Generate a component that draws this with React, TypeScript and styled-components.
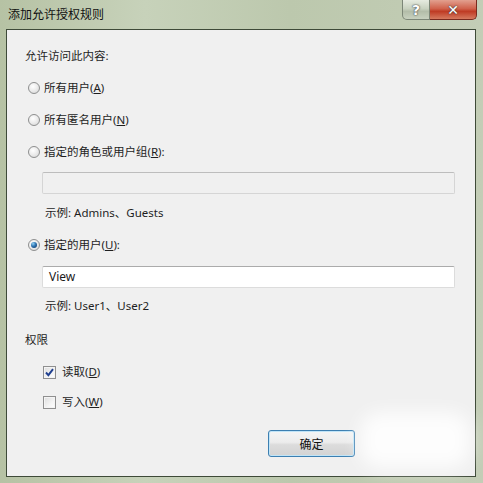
import React from 'react';
import styled, { createGlobalStyle } from 'styled-components';

const GlobalStyle = createGlobalStyle`
  html, body {
    margin: 0;
    padding: 0;
    background: #b7c3a8;
  }
  * {
    box-sizing: border-box;
  }
`;

const Frame = styled.div`
  position: relative;
  width: 483px;
  height: 483px;
  overflow: hidden;
  display: flex;
  flex-direction: column;
  padding: 0 7px 6px 6px;
  background: linear-gradient(90deg, #b6c2a4 0%, #c7d2ba 30%, #bcc8ad 60%, #c3cdb6 100%);
  font-family: 'Noto Sans', 'Noto Sans CJK SC', sans-serif;
  font-size: 11.5px;
  color: #1e1e1e;
`;

const TitleBar = styled.div`
  height: 29px;
  flex: none;
  display: flex;
  align-items: flex-start;
  justify-content: space-between;
`;

const Title = styled.div`
  padding: 5px 0 0 2px;
  font-size: 12px;
  color: #111;
`;

const Caption = styled.div`
  display: flex;
  margin-right: -1px;
`;

const CaptionButton = styled.div<{ $close?: boolean }>`
  width: ${(p) => (p.$close ? 47 : 28)}px;
  height: 20px;
  display: flex;
  align-items: center;
  justify-content: center;
  border: 1px solid ${(p) => (p.$close ? '#7a2a1e' : '#7c8677')};
  border-top: none;
  border-left: ${(p) => (p.$close ? 'none' : '1px solid #7c8677')};
  border-radius: ${(p) => (p.$close ? '0 0 5px 0' : '0 0 0 5px')};
  background: ${(p) =>
    p.$close
      ? 'linear-gradient(180deg, #e2a08f 0%, #d0624c 45%, #bf3b24 60%, #d67a5f 100%)'
      : 'linear-gradient(180deg, #e6ebe0 0%, #c9d2c0 45%, #b3bda9 60%, #c8d1bf 100%)'};
  color: #fff;
  font-weight: bold;
  font-size: 14px;
  font-family: 'DejaVu Sans', sans-serif;
  text-shadow: 0 0 2px #444, 0 0 1px #333;
`;

const Client = styled.div`
  flex: 1;
  border: 1px solid #3e4a38;
  background: #f0f0f0;
  padding: 0 0 0 18px;
  display: flex;
  flex-direction: column;
  align-items: flex-start;
`;

const Line = styled.div<{ $top: number; $indent?: number }>`
  margin-top: ${(p) => p.$top}px;
  margin-left: ${(p) => p.$indent ?? 0}px;
  height: 20px;
  line-height: 20px;
  display: flex;
  align-items: center;
  white-space: nowrap;
`;

const Radio = styled.span<{ $checked?: boolean }>`
  position: relative;
  width: 12px;
  height: 12px;
  margin: 0 4px 0 -1px;
  border-radius: 50%;
  border: 1px solid #8e8f8f;
  background: radial-gradient(circle at 40% 35%, #ffffff 0%, #ebebeb 50%, #d2d2d2 100%);
  flex: none;

  &::after {
    content: '';
    display: ${(p) => (p.$checked ? 'block' : 'none')};
    position: absolute;
    left: 2px;
    top: 2px;
    width: 6px;
    height: 6px;
    border-radius: 50%;
    background: radial-gradient(circle at 35% 30%, #8fd0f2 0%, #2d73b1 45%, #0c2e5a 100%);
  }
`;

const Check = styled.span<{ $checked?: boolean }>`
  width: 13px;
  height: 13px;
  margin-right: 6px;
  border: 1px solid #8f8f8f;
  background: linear-gradient(135deg, #dcdcdc 0%, #f4f4f4 60%, #ffffff 100%);
  box-shadow: inset 0 0 0 1px #f4f4f4;
  display: flex;
  align-items: center;
  justify-content: center;
  flex: none;
`;

const TextBox = styled.div<{ $disabled?: boolean; $top: number }>`
  margin: ${(p) => p.$top}px 0 0 17px;
  width: 413px;
  height: 22px;
  padding: 0 6px;
  line-height: 20px;
  font-size: 12px;
  border: 1px solid ${(p) => (p.$disabled ? '#d5d5d5' : '#dcdcdc')};
  border-top-color: ${(p) => (p.$disabled ? '#bdbdbd' : '#ababab')};
  border-radius: 2px;
  background: ${(p) => (p.$disabled ? '#f0f0f0' : '#ffffff')};
  color: #1a1a1a;
`;

const Hint = styled(Line)`
  margin-left: 20px;
`;

const Footer = styled.div`
  margin-top: 18px;
  margin-left: 243px;
  display: flex;
`;

const Button = styled.div`
  width: 87px;
  height: 27px;
  display: flex;
  align-items: center;
  justify-content: center;
  border: 1px solid #3c7fb1;
  border-radius: 3px;
  background: linear-gradient(180deg, #f4f5f5 0%, #ececec 45%, #dcdcdc 55%, #d3d3d3 100%);
  box-shadow: inset 0 0 0 1px #c0e4f7;
  font-size: 12px;
  color: #111;
`;

const Smudge = styled.div`
  position: absolute;
  left: 360px;
  top: 412px;
  width: 110px;
  height: 56px;
  border-radius: 20px;
  background: rgba(255, 255, 255, 0.85);
  filter: blur(9px);
  pointer-events: none;
`;

const Key = styled.u`
  text-underline-offset: 1px;
`;

const RadioRow: React.FC<{ top: number; checked?: boolean; children: React.ReactNode }> = ({
  top,
  checked,
  children,
}) => (
  <Line $top={top} $indent={4}>
    <Radio $checked={checked} />
    {children}
  </Line>
);

const CheckRow: React.FC<{ top: number; checked?: boolean; children: React.ReactNode }> = ({
  top,
  checked,
  children,
}) => (
  <Line $top={top} $indent={18}>
    <Check $checked={checked}>
      {checked && (
        <svg width="9" height="9" viewBox="0 0 9 9">
          <path d="M1 4.5 L3.4 7.2 L8 1.2" fill="none" stroke="#1f3f8f" strokeWidth="1.9" />
        </svg>
      )}
    </Check>
    {children}
  </Line>
);

export default function App() {
  return (
    <>
      <GlobalStyle />
      <Frame>
        <TitleBar>
          <Title>添加允许授权规则</Title>
          <Caption>
            <CaptionButton>?</CaptionButton>
            <CaptionButton $close>✕</CaptionButton>
          </Caption>
        </TitleBar>
        <Client>
          <Line $top={16}>允许访问此内容:</Line>
          <RadioRow top={12}>
            所有用户(<Key>A</Key>)
          </RadioRow>
          <RadioRow top={12}>
            所有匿名用户(<Key>N</Key>)
          </RadioRow>
          <RadioRow top={12}>
            指定的角色或用户组(<Key>R</Key>):
          </RadioRow>
          <TextBox $disabled $top={10} />
          <Hint $top={9}>示例: Admins、Guests</Hint>
          <RadioRow top={12} checked>
            指定的用户(<Key>U</Key>):
          </RadioRow>
          <TextBox $top={11}>View</TextBox>
          <Hint $top={8}>示例: User1、User2</Hint>
          <Line $top={14}>权限</Line>
          <CheckRow top={12} checked>
            读取(<Key>D</Key>)
          </CheckRow>
          <CheckRow top={10}>
            写入(<Key>W</Key>)
          </CheckRow>
          <Footer>
            <Button>确定</Button>
          </Footer>
        </Client>
        <Smudge />
      </Frame>
    </>
  );
}
